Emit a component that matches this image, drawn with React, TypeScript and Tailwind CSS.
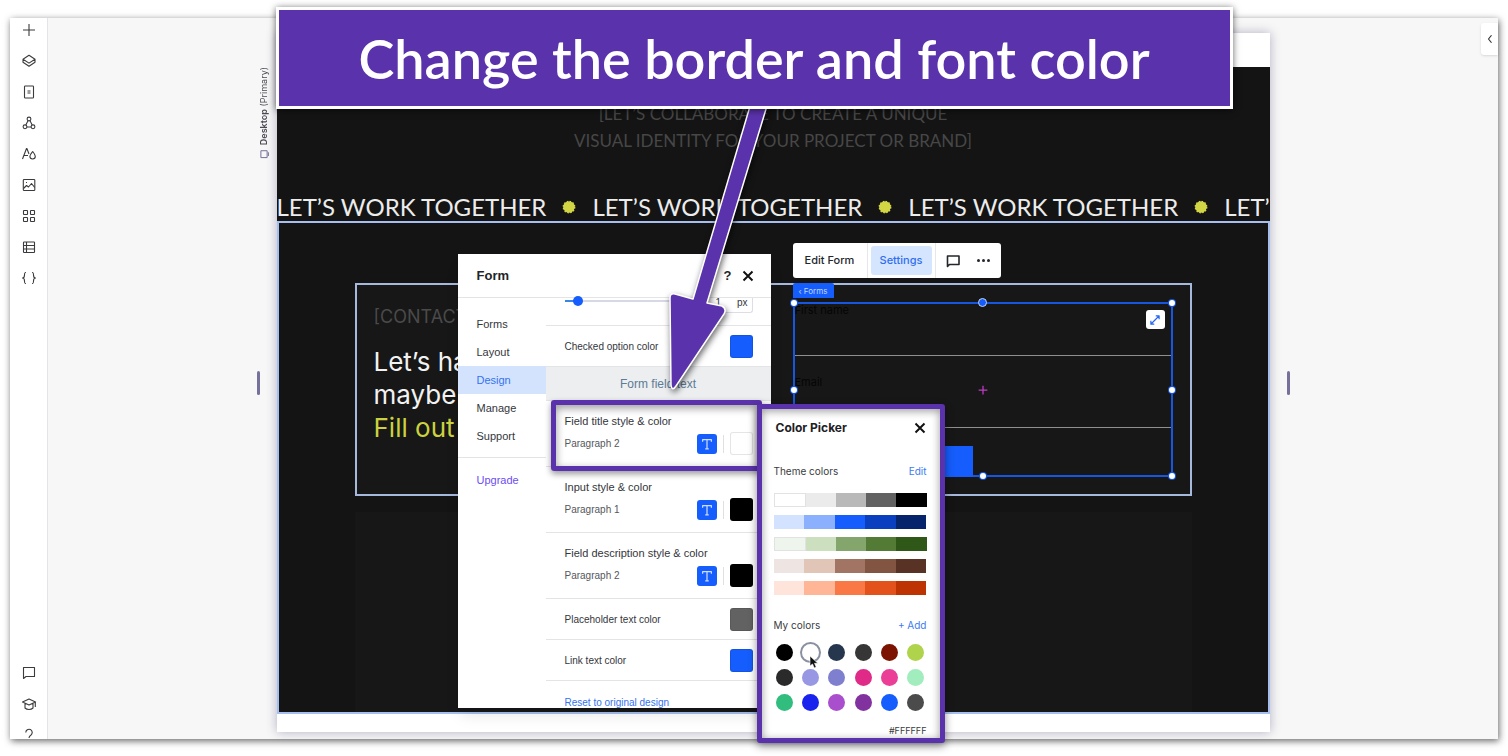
import { FC, ReactNode } from 'react';
import { clsx } from 'clsx';

const Icon: FC<{ children: ReactNode; className?: string }> = ({ children, className = 'size-4' }) => (
	<svg viewBox="0 0 16 16" className={className} fill="none" stroke="currentColor" strokeWidth="1.1" strokeLinejoin="round" aria-hidden="true">
		{children}
	</svg>
);

const CommentPath = <path d="M2.5 2.5h11v9H5l-2.5 2z" />;

const tools: { label: string; icon: ReactNode }[] = [
	{ label: 'Add elements', icon: <path d="M8 2v12M2 8h12" /> },
	{ label: 'Layers', icon: <path d="M8 2.300l6 3.900-6 3.900-6-3.900zM2 6.200v3l6 4 6-4v-3" /> },
	{
		label: 'Pages',
		icon: (
			<>
				<rect x="3.500" y="2" width="9" height="12" rx="0.8" />
				<path d="M6.500 7h3M6.500 9h3" />
			</>
		),
	},
	{
		label: 'Masters',
		icon: (
			<>
				<circle cx="8" cy="4" r="1.900" />
				<circle cx="4" cy="11.800" r="1.900" />
				<circle cx="12" cy="11.800" r="1.900" />
				<path d="M7 5.800L4.800 10M9 5.800l2.200 4.200M5.900 12h4.200" />
			</>
		),
	},
	{ label: 'Site styles', icon: <path d="M1.500 13L5.500 2.500h.4L8 8M3 9.500h4M11.700 5.500c1.600 2 2.600 3.300 2.600 4.800a2.700 2.700 0 0 1-5.400 0c0-1.500 1.200-2.800 2.800-4.800z" /> },
	{
		label: 'Media',
		icon: (
			<>
				<rect x="2.300" y="2.500" width="11.500" height="11" rx="0.8" />
				<path d="M2.500 11.500l3-3 2 1.500 3-3.500 3.200 4M5 5.500h1" />
			</>
		),
	},
	{
		label: 'Apps',
		icon: (
			<>
				<rect x="2.500" y="2.500" width="4" height="4" rx="0.5" />
				<rect x="9.500" y="2.500" width="4" height="4" rx="0.5" />
				<rect x="2.500" y="9.500" width="4" height="4" rx="0.5" />
				<rect x="9.500" y="9.500" width="4" height="4" rx="0.5" />
			</>
		),
	},
	{
		label: 'Content manager',
		icon: (
			<>
				<rect x="2.500" y="3" width="11" height="10.500" rx="0.6" />
				<path d="M2.500 6.500h11M2.500 10h11M5.500 3v10.500" />
			</>
		),
	},
	{
		label: 'Code',
		icon: <path d="M5 2.500c-1.500 0-1.500.5-1.500 2.500S3 8 1.500 8C3 8 3.500 9 3.500 11s0 2.500 1.500 2.500M11 2.500c1.500 0 1.500.5 1.500 2.500S13 8 14.500 8C13 8 12.500 9 12.500 11s0 2.500-1.500 2.500" />,
	},
];

const helpTools: { label: string; icon: ReactNode }[] = [
	{ label: 'Comments', icon: CommentPath },
	{ label: 'Academy', icon: <path d="M8 3l6.500 3L8 9 1.500 6zM4 7.500V12c2 2 6 2 8 0V7.500M14.300 6v5" /> },
	{ label: 'Help', icon: <path d="M4.800 5.500a3.200 3.200 0 1 1 5.200 2.500C8.600 9 8 9.500 8 11M8 13v1" /> },
];

const ToolList: FC<{ items: typeof tools }> = ({ items }) => (
	<div className="flex flex-col items-center gap-[15px]">
		{items.map(({ label, icon }) => (
			<button key={label} type="button" aria-label={label} className="text-[#3a3b3d]">
				<Icon>{icon}</Icon>
			</button>
		))}
	</div>
);

const Sidebar = () => (
	<nav className="flex w-[38px] flex-none flex-col justify-between overflow-hidden border-r border-[#e3e4e6] bg-white pt-1">
		<ToolList items={tools} />
		<div className="-mb-1">
			<ToolList items={helpTools} />
		</div>
	</nav>
);

const Sun = () => (
	<svg viewBox="0 0 14 14" className="size-3.5 flex-none" aria-hidden="true">
		<circle cx="7" cy="7" r="5.600" fill="#d2d645" stroke="#d2d645" strokeWidth="1.600" strokeDasharray="1.500 1.430" />
		<circle cx="7" cy="7" r="5.600" fill="#d2d645" />
	</svg>
);

const Hero = () => (
	<section className="h-[154px] overflow-hidden bg-[#141414] font-['Lato',sans-serif]">
		<p className="pt-[33px] text-center text-[17px] leading-[27px] whitespace-nowrap text-[#474747]">
			[LET’S COLLABORATE TO CREATE A UNIQUE
			<br />
			VISUAL IDENTITY FOR YOUR PROJECT OR BRAND]
		</p>
		<div className="mt-[39px] flex items-center gap-4 text-2xl leading-7 whitespace-nowrap text-[#ececec]">
			{[0, 1, 2, 3].map((i) => (
				<div key={i} className="flex flex-none items-center gap-4">
					<span>LET’S WORK TOGETHER</span>
					<Sun />
				</div>
			))}
		</div>
	</section>
);

const handles = [
	'-top-1 -left-1',
	'-top-1 -right-1',
	'top-[83px] -left-1',
	'top-[83px] -right-1',
	'-bottom-1 -left-1',
	'-bottom-1 left-[185px]',
	'-bottom-1 -right-1',
];

const SelectedForm = () => (
	<form className="relative h-[175px] w-[380px] border-2 border-[#1656e0] text-[11px] text-[#050505]">
		<label className="flex h-[52px] flex-col border-b border-[#8f8f8f] leading-3">
			First name
			<input type="text" className="flex-1 outline-none" />
		</label>
		<label className="flex h-[72px] flex-col border-b border-[#8f8f8f] pt-5 leading-3">
			Email
			<input type="email" className="flex-1 outline-none" />
		</label>
		<button type="button" aria-label="Submit" className="mt-[18px] block h-[31px] w-[178px] bg-[#155dfc]" />
		{handles.map((place) => (
			<span key={place} className={clsx('absolute size-1.5 rounded-full bg-white ring-1 ring-[#1656e0]', place)} />
		))}
		<span className="absolute -top-1.5 left-[183px] size-[9px] rounded-full border border-[#c9d4e8] bg-[#155dfc]" />
		<span className="absolute top-[81px] left-[183px] text-[#c03cc4]">
			<Icon className="size-2.5">
				<path d="M8 1v14M1 8h14" strokeWidth="2" />
			</Icon>
		</span>
		<button type="button" aria-label="Expand" className="absolute top-1.5 right-1.5 flex size-[19px] items-center justify-center rounded-[3px] bg-white text-[#2567f0]">
			<Icon className="size-3">
				<path d="M3 13L13 3M9 2.500h4.500V7M2.500 9v4.500H7" strokeWidth="1.600" />
			</Icon>
		</button>
		<button type="button" className="absolute -top-[21px] -left-0.5 flex h-[15px] w-[41px] items-center justify-center rounded-t-[2px] bg-[#155dfc] text-[8px] whitespace-nowrap text-[#c3d6ff]">
			‹ Forms
		</button>
	</form>
);

const FormToolbar = () => (
	<div role="toolbar" aria-label="Form" className="absolute top-[210px] left-[516px] flex h-[35px] w-[208px] items-stretch rounded-[3px] bg-white text-[11px] text-[#24262b]">
		<button type="button" className="w-[75px] border-r border-[#e6e7ea] font-medium">
			Edit Form
		</button>
		<div className="flex w-[68px] border-r border-[#e6e7ea] p-[3px]">
			<button type="button" className="flex-1 rounded-[3px] bg-[#d6e5fe] font-medium text-[#2f6ef2]">
				Settings
			</button>
		</div>
		<button type="button" aria-label="Comment" className="flex w-[35px] items-center justify-center">
			<Icon>
				<path d="M2.500 3h11.500v8.500H4.500L2.500 13.500z" strokeWidth="1.600" />
			</Icon>
		</button>
		<button type="button" aria-label="More" className="flex flex-1 items-center justify-center gap-0.5 pr-1">
			{[0, 1, 2].map((i) => (
				<span key={i} className="size-[3px] rounded-full bg-[#24262b]" />
			))}
		</button>
	</div>
);

const ContactSection = () => (
	<section className="h-[493px] overflow-hidden border-2 border-[#a6bfee] bg-[#141414] px-[76px] pt-[60px]">
		<div className="flex h-[213px] justify-between border-2 border-[#a6b8dc] bg-[#171717] pt-[17px] pr-[17px] pl-[17px] whitespace-nowrap">
			<div>
				<p className="pt-[3px] text-lg leading-6 text-[#4a4a4a]">[CONTACT</p>
				<h2 className="mt-4 text-[26px] leading-[33px] text-[#f2f2f2]">
					Let’s ha
					<br />
					maybe
					<br />
					<span className="text-[#ccd13f]">Fill out t</span>
				</h2>
			</div>
			<SelectedForm />
		</div>
		<div className="mt-4 h-[200px] bg-[#171717]" />
	</section>
);

const Swatch: FC<{ label: string; color: string }> = ({ label, color }) => (
	<button type="button" aria-label={label} className={clsx('size-[23px] flex-none rounded-[3px] border border-black/10', color)} />
);

const Close: FC<{ label: string }> = ({ label }) => (
	<button type="button" aria-label={label} className="text-[#111]">
		<Icon className="size-3">
			<path d="M2 2l12 12M14 2L2 14" strokeWidth="2.600" />
		</Icon>
	</button>
);

const TextStyleRow: FC<{ title: string; style: string; color: string }> = ({ title, style, color }) => (
	<div className="h-[66px] border-b border-[#e3e4e6] pt-3 pr-[18px] pl-[19px]">
		<p className="text-[11px] leading-4 text-[#34363b]">{title}</p>
		<div className="mt-[3px] flex items-center">
			<span className="flex-1 text-[10px] leading-4 text-[#55575c]">{style}</span>
			<button type="button" aria-label={`${title} text style`} className="flex size-5 items-center justify-center rounded-[3px] bg-[#155dfc] text-[#cddcff]">
				<Icon className="size-3.5">
					<path d="M3 5.500V3h10v2.500M8 3v10.500M6 13.500h4" strokeWidth="1.400" />
				</Icon>
			</button>
			<span className="mx-1.5 h-[18px] w-px bg-[#dfe0e3]" />
			<Swatch label={title} color={color} />
		</div>
	</div>
);

const ColorRow: FC<{ title: string; color: string }> = ({ title, color }) => (
	<div className="flex h-[41px] items-center justify-between border-b border-[#e3e4e6] pr-[18px] pl-[19px] text-[10px] text-[#34363b]">
		{title}
		<Swatch label={title} color={color} />
	</div>
);

const FormPanel = () => (
	<aside className="absolute top-[221px] left-[181px] flex h-[454px] w-[313px] flex-col overflow-hidden bg-white font-['Liberation_Sans',Arial,sans-serif] shadow-lg">
		<header className="flex h-11 flex-none items-center border-b border-[#e3e4e6] pr-[17px] pl-[19px]">
			<h3 className="flex-1 text-[13px] font-bold text-[#222429]">Form</h3>
			<button type="button" aria-label="Help" className="mr-2.5 text-[13px] font-bold text-[#222429]">
				?
			</button>
			<Close label="Close form panel" />
		</header>
		<div className="flex flex-1">
			<nav className="w-[88px] flex-none pt-3 text-[11px] text-[#34363b]">
				{['Forms', 'Layout', 'Design', 'Manage', 'Support'].map((name) => (
					<button key={name} type="button" className={clsx('block h-7 w-full pl-[19px] text-left', name === 'Design' && 'bg-[#d3e3fd] text-[#3572f0]')}>
						{name}
					</button>
				))}
				<button type="button" className="mt-[7px] block h-[46px] w-full border-t border-[#e3e4e6] pl-[19px] text-left text-[#6c4cf0]">
					Upgrade
				</button>
			</nav>
			<div className="flex-1">
				<div className="flex h-7 items-start justify-between border-b border-[#e3e4e6] pr-[18px] pl-[19px]">
					<div className="relative mt-0.5 h-0.5 w-[118px] bg-[#d7d8e6]">
						<div className="h-full w-3 bg-[#3a86e8]" />
						<span className="absolute -top-1 left-2 size-2.5 rounded-full bg-[#155dfc]" />
					</div>
					<label className="flex h-[15px] w-12 items-center rounded-b-[3px] border border-t-0 border-[#dcdde6] pr-1 pb-1.5 text-[10px] text-[#34363b]">
						<input type="text" defaultValue="1" aria-label="Border width" className="w-0 flex-1 pl-2.5 outline-none" />
						px
					</label>
				</div>
				<ColorRow title="Checked option color" color="bg-[#155dfc]" />
				<h4 className="flex h-[34px] items-center justify-center border-b border-[#e3e4e6] bg-[#eceef0] text-xs text-[#5c7b96]">Form field text</h4>
				<TextStyleRow title="Field title style & color" style="Paragraph 2" color="bg-white" />
				<TextStyleRow title="Input style & color" style="Paragraph 1" color="bg-black" />
				<TextStyleRow title="Field description style & color" style="Paragraph 2" color="bg-black" />
				<ColorRow title="Placeholder text color" color="bg-[#626262]" />
				<ColorRow title="Link text color" color="bg-[#155dfc]" />
				<button type="button" className="mt-3.5 ml-[19px] block text-[10px] text-[#3572f0]">
					Reset to original design
				</button>
			</div>
		</div>
	</aside>
);

const themeColors = [
	['bg-white', 'bg-[#ebebeb]', 'bg-[#b9b9b9]', 'bg-[#626262]', 'bg-black'],
	['bg-[#d3e2fe]', 'bg-[#8bb0fd]', 'bg-[#155dfc]', 'bg-[#0a3fc0]', 'bg-[#06246b]'],
	['bg-[#eef5ec]', 'bg-[#cce0bf]', 'bg-[#84a66d]', 'bg-[#547b36]', 'bg-[#2f5818]'],
	['bg-[#eee4e2]', 'bg-[#e1c6b7]', 'bg-[#a27463]', 'bg-[#825543]', 'bg-[#583225]'],
	['bg-[#fee4da]', 'bg-[#feb696]', 'bg-[#f97845]', 'bg-[#e4521c]', 'bg-[#bd3302]'],
];

const outlined = ['bg-white', 'bg-[#eef5ec]'];

const myColors = [
	'bg-black',
	'bg-white',
	'bg-[#26374d]',
	'bg-[#363636]',
	'bg-[#7b1300]',
	'bg-[#afd34a]',
	'bg-[#2a2a2a]',
	'bg-[#9797e3]',
	'bg-[#7f7fcf]',
	'bg-[#e02a87]',
	'bg-[#ea3e97]',
	'bg-[#a1edbd]',
	'bg-[#30bd7e]',
	'bg-[#1a22ee]',
	'bg-[#a94fcd]',
	'bg-[#82329f]',
	'bg-[#155dfc]',
	'bg-[#4b4b4b]',
];

const ColorPicker = () => (
	<aside className="absolute top-[371px] left-[480px] h-[339px] w-[188px] rounded-[3px] border-[5px] border-[#5a32ab] bg-white pr-[13px] pl-3 text-[#3a3c40] shadow-[0_3px_8px_rgba(0,0,0,0.45),inset_0_2px_8px_rgba(0,0,0,0.4)]">
		<header className="flex h-[38px] items-center justify-between pr-px pl-0.5">
			<h3 className="text-xs font-bold text-[#1e2024]">Color Picker</h3>
			<Close label="Close color picker" />
		</header>
		<div className="mt-4 flex items-center justify-between text-[10px] leading-4">
			Theme colors
			<button type="button" className="text-[#3a7bf2]">
				Edit
			</button>
		</div>
		<div className="mt-3.5 flex flex-col gap-2">
			{themeColors.map((row, i) => (
				<div key={i} className="flex h-3.5">
					{row.map((color) => (
						<button key={color} type="button" aria-label="Theme color" className={clsx('flex-1', color, outlined.includes(color) && 'border border-[#e2e2e2]')} />
					))}
				</div>
			))}
		</div>
		<div className="mt-[22px] flex items-center justify-between text-[10px] leading-4">
			My colors
			<button type="button" className="text-[#3a7bf2]">
				+ Add
			</button>
		</div>
		<div className="mt-[11px] grid grid-cols-6 justify-items-center gap-x-1 gap-y-2">
			{myColors.map((color) => (
				<button
					key={color}
					type="button"
					aria-label="Saved color"
					className={clsx('size-[17px] rounded-full', color, color === 'bg-white' && 'ring-2 ring-[#8a90a0]')}
				/>
			))}
		</div>
		<p className="mt-3 text-right text-[9px] leading-4">#FFFFFF</p>
		<svg viewBox="0 0 10 14" className="absolute top-[246px] left-[47px] h-3.5 w-2.5" aria-hidden="true">
			<path d="M1 1v10l2.500-2 1.800 4 1.900-.9L5.500 8.300h3.300z" fill="#111" stroke="#fff" strokeWidth="0.6" />
		</svg>
	</aside>
);

const Callouts = () => (
	<>
		<div className="absolute top-[367px] left-[274px] h-[71px] w-[211px] rounded-[3px] border-[5px] border-[#5a32ab] shadow-[0_3px_6px_rgba(0,0,0,0.4),inset_0_3px_8px_rgba(0,0,0,0.4)]" />
		<ColorPicker />
		<svg viewBox="0 0 120 310" className="absolute top-[67px] left-[383px] h-[310px] w-[120px] drop-shadow-[1px_3px_3px_rgba(0,0,0,0.6)]" aria-hidden="true">
			<path
				d="M93 -4L33 199L15 194Q10 193 10 198L11 285Q12 292 16 286L64 214Q67 209 62 206L47 203L110 -4Z"
				fill="#5a32ab"
				stroke="#fff"
				strokeWidth="1.500"
				strokeLinejoin="round"
			/>
		</svg>
		<h1 className="absolute -top-[26px] -left-px flex h-[102px] w-[957px] items-center justify-center border-[3px] border-white bg-[#5a32ab] font-['Lato',sans-serif] text-[54px] font-semibold whitespace-nowrap text-white shadow-[0_1px_7px_rgba(0,0,0,0.6)]">
			Change the border and font color
		</h1>
	</>
);

const ResizeHandle: FC<{ label: string }> = ({ label }) => <button type="button" aria-label={label} className="h-6 w-[3px] rounded-sm bg-[#76719a]" />;

export default function App() {
	return (
		<div className="flex h-screen overflow-hidden bg-white px-2.5 pt-[18px] pb-[17px] font-['Inter',sans-serif]">
			<div className="flex flex-1 shadow-[1px_2px_7px_rgba(0,0,0,0.6)]">
				<Sidebar />
				<main className="flex flex-1 bg-[#f7f7f7]">
					<div className="flex flex-1 flex-col items-end">
						<div className="mt-[49px] mr-[7px] flex rotate-180 items-center gap-1 text-[9px] leading-3 text-[#4a4a55] [writing-mode:vertical-rl]">
							<Icon className="size-2.5 text-[#76719a]">
								<path d="M3 2.500h10v11H3zM1 5v6" strokeWidth="1.600" />
							</Icon>
							<span>
								<b className="font-semibold">Desktop</b> (Primary)
							</span>
						</div>
						<div className="mt-auto mr-[17px] flex h-[368px] items-start">
							<ResizeHandle label="Resize from left" />
						</div>
					</div>
					<div className="relative mt-[15px] h-[699px] w-[993px] flex-none bg-white pt-[34px] shadow-[0_0_10px_rgba(70,70,120,0.4)]">
						<Hero />
						<ContactSection />
						<FormPanel />
						<FormToolbar />
						<Callouts />
					</div>
					<div className="relative flex flex-1 flex-col items-start justify-end">
						<button type="button" aria-label="Open inspector" className="absolute top-[5px] right-0 flex h-8 w-[17px] items-center justify-center rounded-l-[3px] bg-white text-[#333] shadow">
							<Icon className="size-3">
								<path d="M10 3L6 8l4 5" strokeWidth="1.600" />
							</Icon>
						</button>
						<div className="ml-[17px] flex h-[368px] items-start">
							<ResizeHandle label="Resize from right" />
						</div>
					</div>
				</main>
			</div>
		</div>
	);
}
